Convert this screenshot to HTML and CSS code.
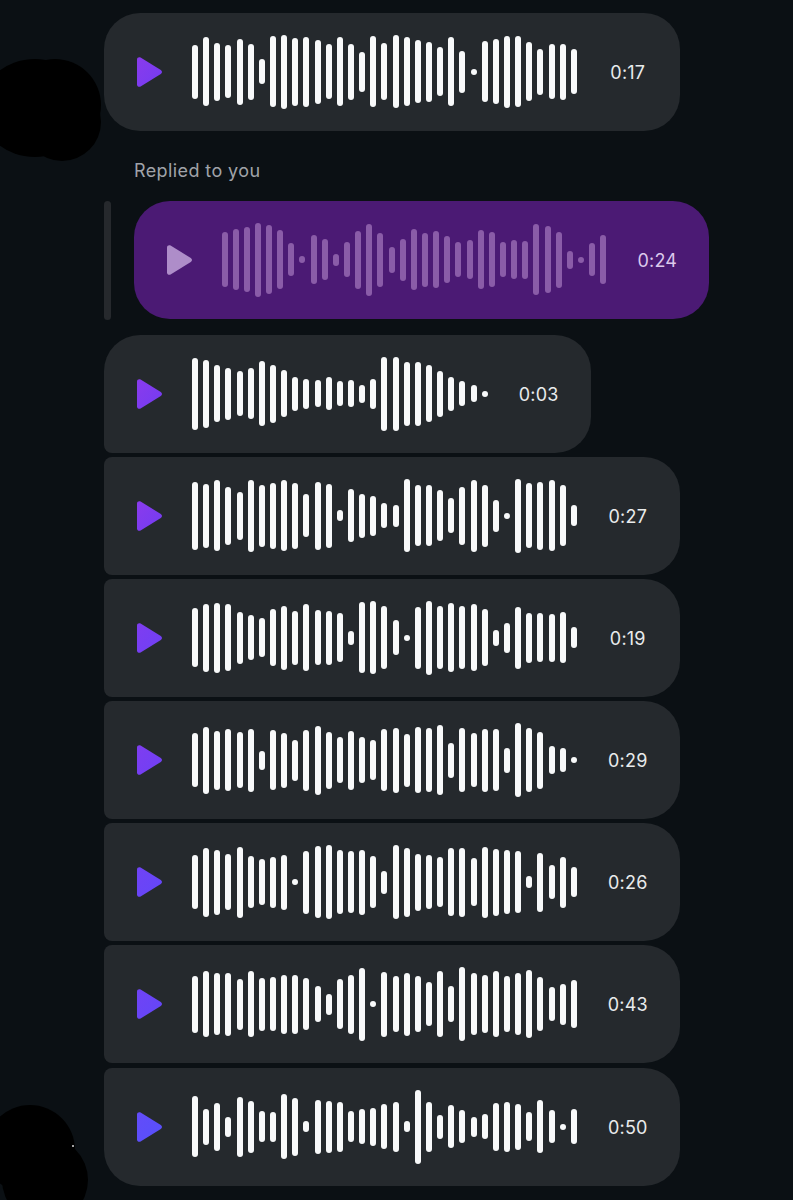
FILE: index.html
```html
<!DOCTYPE html>
<html lang="en">
    <head>
        <meta charset="UTF-8" />
        <title>Voice messages</title>
        <link rel="stylesheet" href="styles.css">
    </head>
    <body>
        <!-- scribbled-out avatars -->
        <svg class="scribbles" width="793" height="1200" viewBox="0 0 793 1200">
            <ellipse cx="35" cy="108" rx="55" ry="49" />
            <circle cx="55" cy="105" r="46" />
            <circle cx="62" cy="122" r="39" />
            <circle cx="30" cy="1150" r="45" />
            <circle cx="45" cy="1180" r="43" />
            <circle class="speck" cx="73" cy="1146" r="1" />
        </svg>

        <svg class="defs" width="0" height="0">
            <defs>
                <path id="tri" d="M0 2.5C0 .5 2-.4 3.6.5L23.8 13C25.4 14 25.4 16 23.8 17L3.6 29.5C2 30.4 0 29.5 0 27.5Z" />
                <linearGradient id="g1" x1="0" y1="0" x2="1" y2="1"><stop offset="0" stop-color="#8a3bec" /><stop offset="1" stop-color="#733cf2" /></linearGradient>
                <linearGradient id="g2" x1="0" y1="0" x2="1" y2="1"><stop offset="0" stop-color="#7f3df0" /><stop offset="1" stop-color="#6e40f5" /></linearGradient>
                <linearGradient id="g3" x1="0" y1="0" x2="1" y2="1"><stop offset="0" stop-color="#7043f5" /><stop offset="1" stop-color="#6247f8" /></linearGradient>
                <linearGradient id="g4" x1="0" y1="0" x2="1" y2="1"><stop offset="0" stop-color="#634cf9" /><stop offset="1" stop-color="#5650fb" /></linearGradient>
            </defs>
        </svg>

        <div class="thread">
            <div class="bubble">
                <svg class="play" viewBox="0 0 25 30"><use href="#tri" fill="url(#g1)" /></svg>
                <div class="wave" data-bars="54 69 58 53 66 56 25 71 74 68 70 64 55 69 56 40 71 57 73 69 63 60 49 69 42 6 61 65 72 71 59 46 55 56 45"></div>
                <span class="time">0:17</span>
            </div>

            <p class="reply-label">Replied to you</p>
            <div class="reply">
                <div class="reply-line"></div>
                <div class="bubble quoted">
                    <svg class="play" viewBox="0 0 25 30"><use href="#tri" fill="#ae8dc9" /></svg>
                    <div class="wave" data-bars="55 61 65 74 69 59 33 7 49 41 12 35 58 72 54 26 42 61 54 57 47 35 39 59 55 35 39 38 71 67 56 18 6 33 49"></div>
                    <span class="time">0:24</span>
                </div>
            </div>

            <div class="group">
                <div class="bubble first">
                    <svg class="play" viewBox="0 0 25 30"><use href="#tri" fill="url(#g1)" /></svg>
                    <div class="wave" data-bars="72 68 57 52 45 51 65 58 47 34 30 27 33 25 27 18 30 74 74 64 64 57 46 34 25 17 6"></div>
                    <span class="time">0:03</span>
                </div>
                <div class="bubble middle">
                    <svg class="play" viewBox="0 0 25 30"><use href="#tri" fill="url(#g1)" /></svg>
                    <div class="wave" data-bars="68 64 71 58 48 72 62 66 71 66 43 68 64 11 53 44 40 25 22 73 61 61 51 35 58 72 62 32 6 74 65 68 71 61 21"></div>
                    <span class="time">0:27</span>
                </div>
                <div class="bubble middle">
                    <svg class="play" viewBox="0 0 25 30"><use href="#tri" fill="url(#g2)" /></svg>
                    <div class="wave" data-bars="59 68 70 67 52 45 39 57 64 54 67 55 54 49 14 71 73 63 35 6 62 74 63 69 63 67 57 16 30 62 50 49 48 51 21"></div>
                    <span class="time">0:19</span>
                </div>
                <div class="bubble middle">
                    <svg class="play" viewBox="0 0 25 30"><use href="#tri" fill="url(#g2)" /></svg>
                    <div class="wave" data-bars="54 67 59 62 56 63 19 60 55 41 61 69 57 46 59 46 40 62 65 53 66 64 70 35 64 54 63 62 25 74 64 57 28 24 6"></div>
                    <span class="time">0:29</span>
                </div>
                <div class="bubble middle">
                    <svg class="play" viewBox="0 0 25 30"><use href="#tri" fill="url(#g3)" /></svg>
                    <div class="wave" data-bars="54 69 65 56 71 52 46 51 55 6 63 72 74 64 62 65 52 23 74 69 57 54 50 68 69 48 71 67 64 62 12 59 34 51 30"></div>
                    <span class="time">0:26</span>
                </div>
                <div class="bubble middle">
                    <svg class="play" viewBox="0 0 25 30"><use href="#tri" fill="url(#g3)" /></svg>
                    <div class="wave" data-bars="57 66 62 63 51 66 53 54 59 59 52 36 21 50 59 73 6 65 56 63 56 44 66 36 74 62 58 66 56 62 68 54 34 41 48"></div>
                    <span class="time">0:43</span>
                </div>
                <div class="bubble last">
                    <svg class="play" viewBox="0 0 25 30"><use href="#tri" fill="url(#g4)" /></svg>
                    <div class="wave" data-bars="61 36 48 20 60 52 31 30 65 58 11 54 52 50 31 35 38 45 50 11 74 50 24 43 33 20 25 48 50 46 29 53 33 6 35"></div>
                    <span class="time">0:50</span>
                </div>
            </div>
        </div>

        <script>
            // build the bars of each waveform from its data-bars list
            document.querySelectorAll(".wave").forEach((wave) => {
                wave.dataset.bars.split(" ").forEach((height) => {
                    const bar = document.createElement("span");
                    bar.className = "bar";
                    bar.style.height = `${height}px`;
                    wave.appendChild(bar);
                });
            });
        </script>
    </body>
</html>
```

FILE: styles.css
```css
/* Reset */
* {
    box-sizing: border-box;
    margin: 0;
    padding: 0;
}

body {
    position: relative;
    height: 1200px;
    overflow: hidden;
    font-family: "Inter", "Liberation Sans", sans-serif;
    background-color: #0b1014;
    color: #e9ebec;
}

.scribbles {
    position: absolute;
    top: 0;
    left: 0;
    fill: #000;
}

.scribbles .speck {
    fill: #d8d8d8;
}

.defs {
    position: absolute;
}

.thread {
    position: relative;
    padding: 12.5px 0 0 104px;
}

.bubble {
    display: flex;
    align-items: center;
    width: fit-content;
    height: 118px;
    padding-left: 33px;
    padding-right: 22px;
    background-color: #25292d;
    border-radius: 36px;
}

.first {
    border-bottom-left-radius: 8px;
}

.middle {
    border-top-left-radius: 8px;
    border-bottom-left-radius: 8px;
}

.last {
    border-top-left-radius: 8px;
}

.play {
    display: block;
    width: 25px;
    height: 30px;
    margin-right: 30px;
}

.wave {
    display: flex;
    align-items: center;
    gap: 5.15px;
    height: 75px;
}

.bar {
    display: block;
    width: 6px;
    border-radius: 3px;
    background-color: #f8f9fa;
}

.time {
    width: 60px;
    margin-left: 21px;
    padding-top: 2px;
    text-align: center;
    font-size: 18px;
    line-height: 22px;
    letter-spacing: 0.2px;
}

.reply-label {
    margin: 29px 0 0 30px;
    font-size: 18px;
    line-height: 22px;
    letter-spacing: 0.4px;
    color: #a0a3a9;
}

.reply {
    display: flex;
    gap: 22.5px;
    margin-top: 19px;
}

.reply-line {
    width: 7px;
    height: 119px;
    border-radius: 4px;
    background-color: #26292d;
}

.quoted {
    background-color: #4b1a74;
}

.quoted .bar {
    background-color: #8a5ca8;
}

.quoted .time {
    color: #dcc9ec;
}

.group {
    display: flex;
    flex-direction: column;
    gap: 4.2px;
    margin-top: 15px;
}
```
